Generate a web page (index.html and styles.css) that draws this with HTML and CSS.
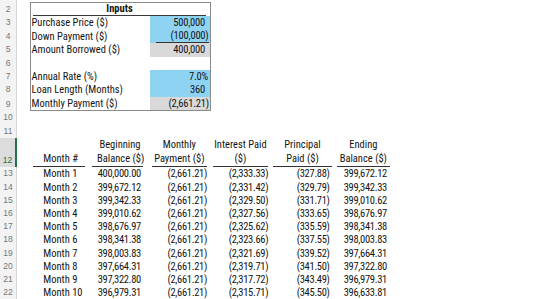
FILE: index.html
```html
<!DOCTYPE html>
<html>
<head>
<meta charset="utf-8">
<link rel="stylesheet" href="styles.css">
</head>
<body>
<div class="sheet">
  <div class="rowhdrs">
    <div class="rh r-top"></div>
    <div class="rh r-edge">2</div>
    <div class="rh">3</div>
    <div class="rh">4</div>
    <div class="rh">5</div>
    <div class="rh">6</div>
    <div class="rh">7</div>
    <div class="rh">8</div>
    <div class="rh r-edge">9</div>
    <div class="rh">10</div>
    <div class="rh">11</div>
    <div class="rh r-head sel">12</div>
    <div class="rh r-data">13</div>
    <div class="rh r-data">14</div>
    <div class="rh r-data">15</div>
    <div class="rh r-data">16</div>
    <div class="rh r-data">17</div>
    <div class="rh r-data">18</div>
    <div class="rh r-data">19</div>
    <div class="rh r-data">20</div>
    <div class="rh r-data">21</div>
    <div class="rh r-data">22</div>
  </div>
  <div class="content">
    <div class="inputs">
      <div class="in-title"><span>Inputs</span></div>
      <div class="in-row"><div class="lbl">Purchase Price ($)</div><div class="val blue pos">500,000</div></div>
      <div class="in-row"><div class="lbl">Down Payment ($)</div><div class="val blue"><span class="acct-ul">(100,000)</span></div></div>
      <div class="in-row"><div class="lbl">Amount Borrowed ($)</div><div class="val gray pos">400,000</div></div>
      <div class="in-row"></div>
      <div class="in-row"><div class="lbl">Annual Rate (%)</div><div class="val blue pct">7.0%</div></div>
      <div class="in-row"><div class="lbl">Loan Length (Months)</div><div class="val blue pos">360</div></div>
      <div class="in-row"><div class="lbl">Monthly Payment ($)</div><div class="val gray neg">(2,661.21)</div></div>
    </div>
    <div class="spacer"></div>
    <div class="amort">
      <div class="thead">
        <div class="th c-month"><div class="th-text">Month #</div></div>
        <div class="th c-beg"><div class="th-text">Beginning<br>Balance ($)</div></div>
        <div class="th c-pay"><div class="th-text">Monthly<br>Payment ($)</div></div>
        <div class="th c-int"><div class="th-text">Interest Paid<br>($)</div></div>
        <div class="th c-pri"><div class="th-text">Principal<br>Paid ($)</div></div>
        <div class="th c-end"><div class="th-text">Ending<br>Balance ($)</div></div>
      </div>
      <div class="tr"><div class="td c-month">Month 1</div><div class="td c-beg">400,000.00</div><div class="td c-pay">(2,661.21)</div><div class="td c-int">(2,333.33)</div><div class="td c-pri">(327.88)</div><div class="td c-end">399,672.12</div></div>
      <div class="tr"><div class="td c-month">Month 2</div><div class="td c-beg">399,672.12</div><div class="td c-pay">(2,661.21)</div><div class="td c-int">(2,331.42)</div><div class="td c-pri">(329.79)</div><div class="td c-end">399,342.33</div></div>
      <div class="tr"><div class="td c-month">Month 3</div><div class="td c-beg">399,342.33</div><div class="td c-pay">(2,661.21)</div><div class="td c-int">(2,329.50)</div><div class="td c-pri">(331.71)</div><div class="td c-end">399,010.62</div></div>
      <div class="tr"><div class="td c-month">Month 4</div><div class="td c-beg">399,010.62</div><div class="td c-pay">(2,661.21)</div><div class="td c-int">(2,327.56)</div><div class="td c-pri">(333.65)</div><div class="td c-end">398,676.97</div></div>
      <div class="tr"><div class="td c-month">Month 5</div><div class="td c-beg">398,676.97</div><div class="td c-pay">(2,661.21)</div><div class="td c-int">(2,325.62)</div><div class="td c-pri">(335.59)</div><div class="td c-end">398,341.38</div></div>
      <div class="tr"><div class="td c-month">Month 6</div><div class="td c-beg">398,341.38</div><div class="td c-pay">(2,661.21)</div><div class="td c-int">(2,323.66)</div><div class="td c-pri">(337.55)</div><div class="td c-end">398,003.83</div></div>
      <div class="tr"><div class="td c-month">Month 7</div><div class="td c-beg">398,003.83</div><div class="td c-pay">(2,661.21)</div><div class="td c-int">(2,321.69)</div><div class="td c-pri">(339.52)</div><div class="td c-end">397,664.31</div></div>
      <div class="tr"><div class="td c-month">Month 8</div><div class="td c-beg">397,664.31</div><div class="td c-pay">(2,661.21)</div><div class="td c-int">(2,319.71)</div><div class="td c-pri">(341.50)</div><div class="td c-end">397,322.80</div></div>
      <div class="tr"><div class="td c-month">Month 9</div><div class="td c-beg">397,322.80</div><div class="td c-pay">(2,661.21)</div><div class="td c-int">(2,317.72)</div><div class="td c-pri">(343.49)</div><div class="td c-end">396,979.31</div></div>
      <div class="tr"><div class="td c-month">Month 10</div><div class="td c-beg">396,979.31</div><div class="td c-pay">(2,661.21)</div><div class="td c-int">(2,315.71)</div><div class="td c-pri">(345.50)</div><div class="td c-end">396,633.81</div></div>
    </div>
  </div>
</div>
</body>
</html>
```

FILE: styles.css
```css
html, body {
  margin: 0;
  padding: 0;
  background: #ffffff;
  overflow: hidden;
}

.sheet {
  display: grid;
  grid-template-columns: 17px 1fr;
  width: 533px;
  height: 299px;
  font-family: "Roboto Condensed", "Liberation Sans", Arial, sans-serif;
  font-size: 10.5px;
  color: #141414;
}

.rowhdrs {
  display: flex;
  flex-direction: column;
  background: #f3f3f3;
}

.rh {
  box-sizing: border-box;
  height: 13.4px;
  line-height: 13.4px;
  text-align: center;
  font-family: "Liberation Sans", Arial, sans-serif;
  font-size: 8.5px;
  color: #767676;
  border-right: 1px solid #d6d6d6;
}

.r-top { height: 2px; }
.r-edge { height: 14.4px; line-height: 14.4px; }
.r-head {
  height: 29.5px;
  line-height: 13px;
  display: flex;
  align-items: flex-end;
  justify-content: center;
}
.r-data { height: 13.2px; line-height: 13.2px; }

.sel {
  background: #dcdcdc;
  color: #1e7145;
  border-right: 2px solid #217346;
}

.content {
  display: flex;
  flex-direction: column;
}

/* Inputs box */
.inputs {
  box-sizing: border-box;
  width: 181px;
  margin: 2px 0 0 12.5px;
  border: 1px solid #8a8a8a;
}

.in-title {
  height: 13.4px;
}

.in-title span {
  display: block;
  margin: 0 3.5px 0 2.5px;
  line-height: 12.4px;
  text-align: center;
  font-weight: bold;
  border-bottom: 1px solid #3a3a3a;
}

.in-row {
  display: grid;
  grid-template-columns: 119px 60px;
  height: 13.4px;
  line-height: 13.4px;
}

.lbl {
  padding-left: 1px;
  white-space: nowrap;
}

.val {
  text-align: right;
  white-space: nowrap;
  letter-spacing: -0.2px;
}

.blue { background: #8fd3f3; }
.gray { background: #d9d9d9; }
.pos { padding-right: 4.5px; }
.neg { padding-right: 0.5px; }
.pct { padding-right: 1.5px; }

.acct-ul {
  display: block;
  margin: 0 1px 0 6px;
  line-height: 12.4px;
  border-bottom: 1px solid #333333;
}

.spacer {
  height: 26.8px;
}

/* Amortization table */
.amort {
  margin-left: 16px;
}

.thead,
.tr {
  display: grid;
  grid-template-columns: 59px 59.7px 61px 60.6px 63.4px 56.3px;
}

.thead {
  height: 29.5px;
  align-items: end;
}

.th-text {
  line-height: 14px;
  text-align: center;
  border-bottom: 1px solid #333333;
  margin-bottom: 1.5px;
  white-space: nowrap;
}

.tr {
  height: 13.2px;
  line-height: 13.2px;
}

.td {
  text-align: right;
  white-space: nowrap;
  letter-spacing: -0.3px;
}

.c-month { width: 52px; }
.c-beg { width: 51px; }
.c-pay { width: 55.3px; }
.c-int { width: 55.6px; }
.c-pri { width: 58.4px; }
.c-end { width: 53.3px; }

.th .th-text { width: 100%; }
.th.c-month .th-text { text-align: left; padding-left: 10.3px; box-sizing: border-box; }
.th.c-beg .th-text { padding-left: 5px; box-sizing: border-box; }

.td.c-month { text-align: left; padding-left: 10.3px; box-sizing: border-box; letter-spacing: 0; }
.td.c-beg { padding-right: 2px; box-sizing: border-box; }
.td.c-pay { padding-right: 0; }
.td.c-int { padding-right: 0; }
.td.c-pri { padding-right: 2px; box-sizing: border-box; }
.td.c-end { padding-right: 3px; box-sizing: border-box; }
```
